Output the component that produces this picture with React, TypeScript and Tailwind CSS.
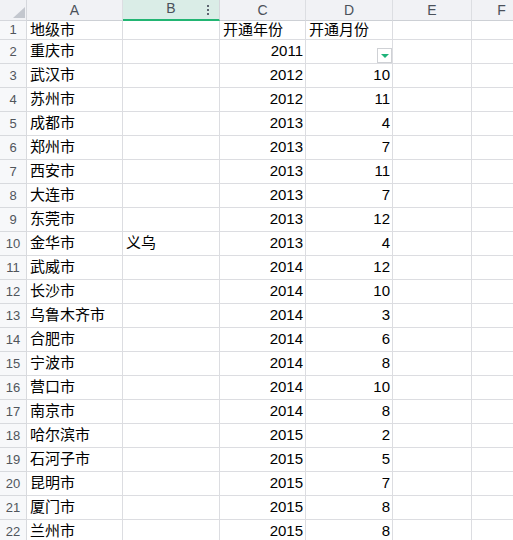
import React from 'react';

const rows: [string, string, string, string][] = [
  ['地级市', '', '开通年份', '开通月份'],
  ['重庆市', '', '2011', ''],
  ['武汉市', '', '2012', '10'],
  ['苏州市', '', '2012', '11'],
  ['成都市', '', '2013', '4'],
  ['郑州市', '', '2013', '7'],
  ['西安市', '', '2013', '11'],
  ['大连市', '', '2013', '7'],
  ['东莞市', '', '2013', '12'],
  ['金华市', '义乌', '2013', '4'],
  ['武威市', '', '2014', '12'],
  ['长沙市', '', '2014', '10'],
  ['乌鲁木齐市', '', '2014', '3'],
  ['合肥市', '', '2014', '6'],
  ['宁波市', '', '2014', '8'],
  ['营口市', '', '2014', '10'],
  ['南京市', '', '2014', '8'],
  ['哈尔滨市', '', '2015', '2'],
  ['石河子市', '', '2015', '5'],
  ['昆明市', '', '2015', '7'],
  ['厦门市', '', '2015', '8'],
  ['兰州市', '', '2015', '8'],
];

const cols = ['A', 'B', 'C', 'D', 'E', 'F'];
const isNum = (v: string) => /^\d+$/.test(v);

export default function App() {
  return (
    <div
      className="w-[513px] h-[540px] overflow-hidden bg-white text-[14px] text-black"
      style={{ fontFamily: '"Liberation Sans", "Noto Sans CJK SC", sans-serif' }}
    >
      <div className="grid grid-cols-[27px_96px_97px_86px_87px_79px_60px]">
        {/* header row */}
        <div className="relative h-[21px] bg-[#f1f2f5] border-r border-b border-[#d5d7dc]">
          <div className="absolute left-[13px] top-[7px] w-0 h-0 border-l-[12px] border-l-transparent border-b-[11px] border-b-[#c3c7ce]" />
        </div>
        {cols.map((c) =>
          c === 'B' ? (
            <div
              key={c}
              className="relative h-[21px] flex items-center justify-center bg-[#daede7] border-r border-[#d5d7dc] border-b-2 border-b-[#22b573] text-[#4b515a]"
            >
              <span className="-mt-[2px]">B</span>
              <div className="absolute right-[10px] top-[5px] flex flex-col gap-[2px]">
                <span className="w-[2px] h-[2px] bg-[#5d6470]" />
                <span className="w-[2px] h-[2px] bg-[#5d6470]" />
                <span className="w-[2px] h-[2px] bg-[#5d6470]" />
              </div>
            </div>
          ) : (
            <div
              key={c}
              className="h-[21px] flex items-center justify-center bg-[#f1f2f5] border-r border-[#dcdee2] border-b border-b-[#cdd0d5] text-[#4b515a]"
            >
              {c}
            </div>
          )
        )}

        {/* data rows */}
        {rows.map((r, i) => {
          const h = i === 0 ? 'h-[19px]' : 'h-[24px]';
          return (
            <React.Fragment key={i}>
              <div
                className={`${h} flex items-center justify-center bg-[#f7f8fa] border-r border-b border-[#d8dade] text-[#50555c] text-[13px]`}
              >
                {i + 1}
              </div>
              {[...r, '', ''].map((v, j) => (
                <div
                  key={j}
                  className={`${h} relative flex items-center border-r border-b border-[#dcdde1] whitespace-nowrap text-[15px] ${
                    isNum(v) ? 'justify-end pr-[2px]' : 'justify-start pl-[3px]'
                  }`}
                >
                  {v}
                  {i === 1 && j === 3 && (
                    <div className="absolute right-0 bottom-0 w-[15px] h-[15px] bg-white border border-[#cfd1d5] flex items-center justify-center">
                      <div className="w-0 h-0 border-l-[4px] border-l-transparent border-r-[4px] border-r-transparent border-t-[4px] border-t-[#1fb37a]" />
                    </div>
                  )}
                </div>
              ))}
            </React.Fragment>
          );
        })}
      </div>
    </div>
  );
}
